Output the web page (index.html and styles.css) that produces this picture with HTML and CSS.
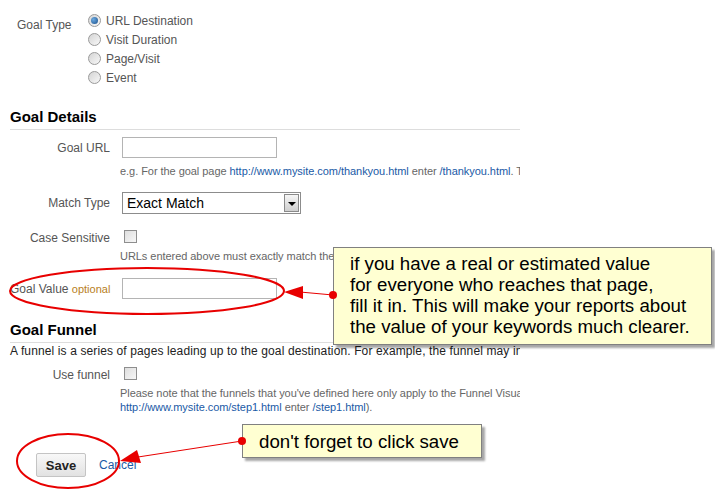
FILE: index.html
```html
<!DOCTYPE html>
<html lang="en">

<head>
    <meta charset="UTF-8">
    <title>Goal Settings</title>
    <link rel="stylesheet" href="styles.css">
</head>

<body>
    <div class="page">
        <div class="goal-type">
            <div class="goal-type-label">Goal Type</div>
            <div class="radio-list">
                <label class="radio-item"><span class="radio checked"></span>URL Destination</label>
                <label class="radio-item"><span class="radio"></span>Visit Duration</label>
                <label class="radio-item"><span class="radio"></span>Page/Visit</label>
                <label class="radio-item"><span class="radio"></span>Event</label>
            </div>
        </div>

        <h2 class="section-title">Goal Details</h2>

        <div class="row row-url">
            <div class="label">Goal URL</div>
            <div class="field"><span class="text-input"></span></div>
        </div>
        <div class="hint hint-url">e.g. For the goal page <a href="#">http://www.mysite.com/thankyou.html</a> enter <a href="#">/thankyou.html</a>. To help you verify that your goal URL is set up correctly</div>

        <div class="row row-match">
            <div class="label">Match Type</div>
            <div class="field">
                <div class="select">
                    <span class="select-value">Exact Match</span>
                    <span class="select-btn"></span>
                </div>
            </div>
        </div>

        <div class="row row-case">
            <div class="label">Case Sensitive</div>
            <div class="field"><span class="checkbox"></span></div>
        </div>
        <div class="hint hint-case">URLs entered above must exactly match the capitalization of visited URLs.</div>

        <div class="row row-value">
            <div class="label">Goal Value <span class="optional">optional</span></div>
            <div class="field"><span class="text-input"></span></div>
        </div>

        <h2 class="section-title funnel-title">Goal Funnel</h2>
        <p class="funnel-desc">A funnel is a series of pages leading up to the goal destination. For example, the funnel may include steps in your checkout process</p>

        <div class="row row-funnel">
            <div class="label">Use funnel</div>
            <div class="field"><span class="checkbox"></span></div>
        </div>
        <div class="hint hint-funnel">Please note that the funnels that you've defined here only apply to the Funnel Visualization Report. For the step page<br><a href="#">http://www.mysite.com/step1.html</a> enter <a href="#">/step1.html</a>).</div>

        <div class="actions">
            <button class="save-btn">Save</button>
            <a href="#" class="cancel">Cancel</a>
        </div>
    </div>

    <!-- annotations drawn over the form -->
    <div class="callout callout-value">if you have a real or estimated value<br>for everyone who reaches that page,<br>fill it in. This will make your reports about<br>the value of your keywords much clearer.</div>
    <div class="callout callout-save">don't forget to click save</div>

    <svg class="marks" width="715" height="493" viewBox="0 0 715 493">
        <ellipse cx="147" cy="291" rx="137" ry="23" fill="none" stroke="#e80000" stroke-width="2" />
        <line x1="333" y1="295" x2="300" y2="292" stroke="#e80000" stroke-width="1" />
        <polygon points="284,292 303,286 303,299" fill="#e80000" />
        <circle cx="333" cy="295" r="4" fill="#e80000" />

        <ellipse cx="68" cy="461" rx="51" ry="27" fill="none" stroke="#e80000" stroke-width="2" />
        <line x1="242" y1="441" x2="138" y2="457" stroke="#e80000" stroke-width="1" />
        <polygon points="120,461 137,450 141,463" fill="#e80000" />
        <circle cx="242" cy="441" r="4" fill="#e80000" />
    </svg>
</body>

</html>
```

FILE: styles.css
```css
body {
    margin: 0;
    font-family: "Liberation Sans", Arial, sans-serif;
    background: white;
    position: relative;
    width: 715px;
    height: 493px;
    overflow: hidden;
}

.page {
    width: 510px;
    padding-left: 10px;
    overflow: hidden;
}

a {
    color: #1a5aa6;
    text-decoration: none;
}

/* goal type radios */
.goal-type {
    display: flex;
    padding-top: 11px;
    padding-left: 7px;
}

.goal-type-label {
    width: 71px;
    font-size: 12px;
    color: #555;
    padding-top: 7px;
}

.radio-item {
    display: flex;
    align-items: center;
    height: 19px;
    font-size: 12px;
    color: #555;
}

.radio {
    display: inline-block;
    width: 11px;
    height: 11px;
    border: 1px solid #9a9a9a;
    border-radius: 50%;
    background: linear-gradient(135deg, #d4d4d4, #f8f8f8);
    margin-right: 5px;
    position: relative;
}

.radio.checked::after {
    content: "";
    position: absolute;
    left: 2px;
    top: 2px;
    width: 7px;
    height: 7px;
    border-radius: 50%;
    background: radial-gradient(circle at 35% 35%, #6aa9e0, #1a4f8c);
}

/* section headings */
.section-title {
    margin: 0;
    margin-top: 20px;
    font-size: 15px;
    line-height: 20px;
    font-weight: bold;
    color: #000;
    padding-bottom: 2px;
    border-bottom: 1px solid #ddd;
}

.funnel-title {
    margin-top: 21px;
}

/* form rows */
.row {
    display: grid;
    grid-template-columns: 100px auto;
    column-gap: 12px;
    align-items: center;
}

.label {
    text-align: right;
    font-size: 12px;
    color: #555;
    white-space: nowrap;
}

.optional {
    font-size: 11px;
    color: #b8801c;
}

.text-input {
    display: block;
    width: 155px;
    height: 21px;
    box-sizing: border-box;
    border: 1px solid #b4b4b4;
    background: white;
}

.row-url {
    margin-top: 7px;
}

.row-match {
    margin-top: 14px;
}

.row-case {
    margin-top: 16px;
    align-items: start;
}

.row-value {
    margin-top: 15px;
}

.row-funnel {
    margin-top: 9px;
    align-items: start;
}

.row-case .label,
.row-funnel .label {
    line-height: 14px;
    padding-top: 1px;
}

.select {
    display: flex;
    align-items: center;
    width: 179px;
    height: 22px;
    box-sizing: border-box;
    border: 1px solid #8c8c8c;
    background: white;
}

.select-value {
    flex: 1;
    font-size: 14px;
    color: #000;
    padding-left: 4px;
}

.select-btn {
    width: 15px;
    height: 18px;
    margin-right: 1px;
    border: 1px solid #8a8a8a;
    box-sizing: border-box;
    background: linear-gradient(#f6f6f6, #cfcfcf);
    position: relative;
}

.select-btn::after {
    content: "";
    position: absolute;
    left: 3px;
    top: 7px;
    border-left: 4px solid transparent;
    border-right: 4px solid transparent;
    border-top: 4px solid #000;
}

.checkbox {
    display: block;
    width: 11px;
    height: 11px;
    margin-left: 2px;
    border: 1px solid #8e8e8e;
    background: linear-gradient(135deg, #dedede, #f7f7f7);
}

/* hints */
.hint {
    margin-left: 110px;
    font-size: 11px;
    line-height: 14px;
    color: #666;
    white-space: nowrap;
    letter-spacing: -0.05px;
}

.hint-url {
    margin-top: 6px;
}

.hint-case {
    margin-top: 4px;
}

.hint-funnel {
    margin-top: 4px;
}

.funnel-desc {
    margin: 1px 0 0;
    font-size: 12px;
    line-height: 14px;
    color: #222;
    white-space: nowrap;
    letter-spacing: 0.12px;
}

/* buttons */
.actions {
    display: flex;
    align-items: center;
    margin-top: 39px;
    padding-left: 26px;
    gap: 13px;
}

.save-btn {
    width: 50px;
    height: 24px;
    font-family: "Liberation Sans", Arial, sans-serif;
    font-size: 13px;
    font-weight: bold;
    color: #222;
    border: 1px solid #c4c4c4;
    border-radius: 2px;
    background: linear-gradient(#f8f8f8, #e2e2e2);
    padding: 0;
}

.cancel {
    font-size: 12px;
}

/* annotations */
.callout {
    position: absolute;
    background: #ffffd2;
    border: 1px solid #808080;
    box-shadow: 3px 3px 2px rgba(0, 0, 0, 0.35);
    font-size: 18.7px;
    color: #000;
    box-sizing: border-box;
    white-space: nowrap;
}

.callout-value {
    left: 333px;
    top: 247px;
    width: 379px;
    height: 98px;
    padding: 5px 0 0 16px;
    line-height: 21px;
}

.callout-save {
    left: 242px;
    top: 424px;
    width: 240px;
    height: 34px;
    padding: 6px 0 0 16px;
    line-height: 21px;
}

.marks {
    position: absolute;
    left: 0;
    top: 0;
    pointer-events: none;
}
```
